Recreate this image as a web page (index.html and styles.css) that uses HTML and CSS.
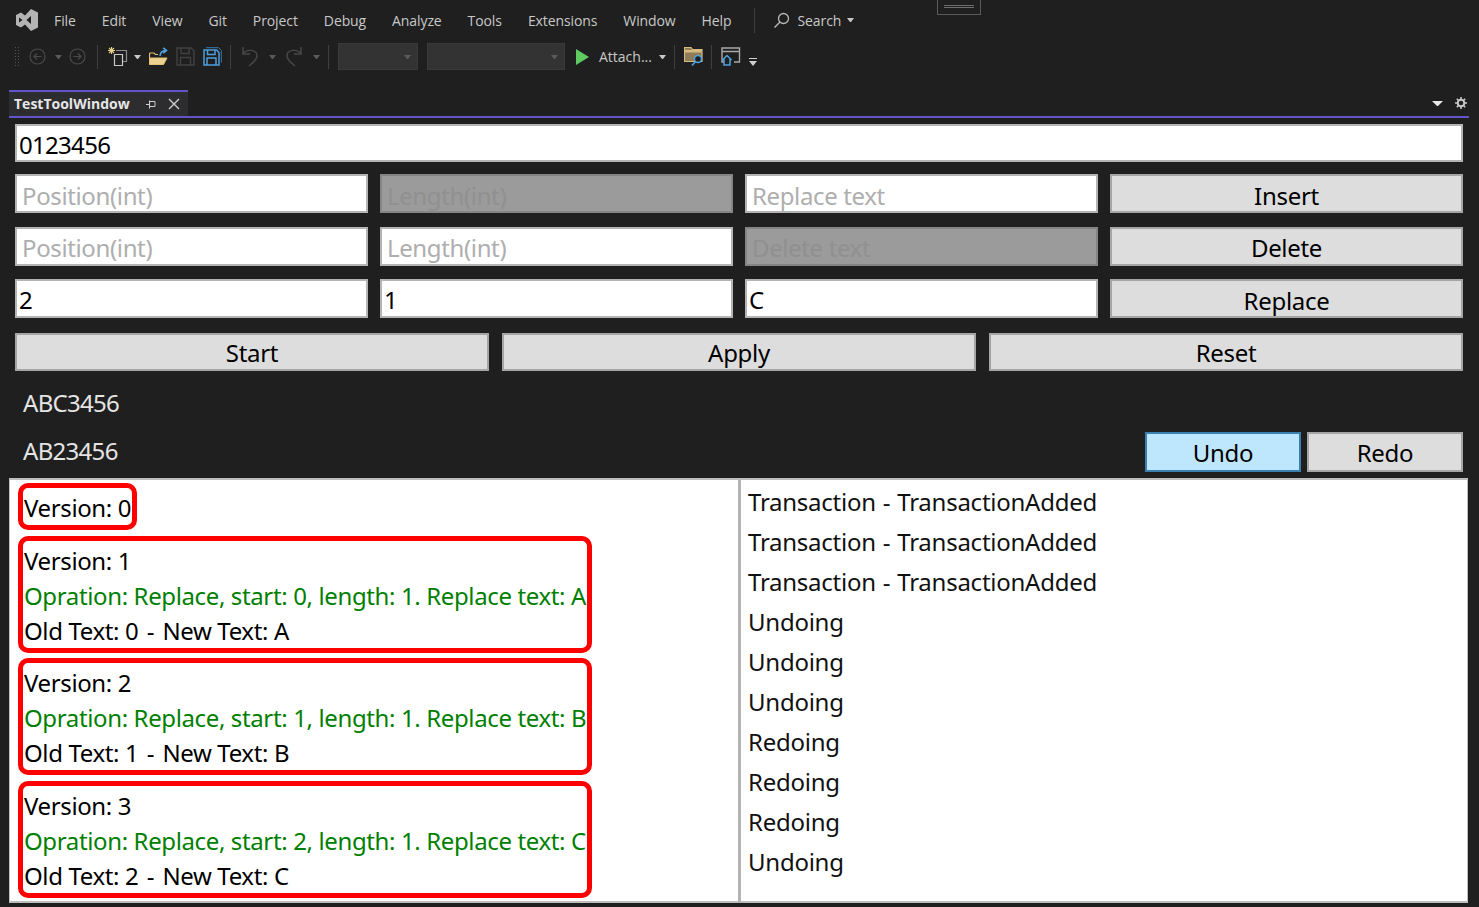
FILE: index.html
```html
<!DOCTYPE html>
<html lang="en">
<head>
  <meta charset="UTF-8" />
  <title>TestToolWindow</title>
  <link rel="stylesheet" href="styles.css">
</head>
<body>
  <div class="title-mark"><i></i></div>

  <nav class="menubar">
    <svg class="logo" width="24" height="24" viewBox="0 0 24 24"><path fill="#b4b4b4" fill-rule="evenodd" d="M6 4.500 L10 7.500 L16 1 L23 4.500 V19.500 L16 23 L10 16.500 L6 19.500 L1 17 V7 Z M4 9.500 V14.500 L7.500 12 Z M16 8 L11.500 12 L16 16 Z"/></svg>
    <span class="menu-item">File</span>
    <span class="menu-item">Edit</span>
    <span class="menu-item">View</span>
    <span class="menu-item">Git</span>
    <span class="menu-item">Project</span>
    <span class="menu-item">Debug</span>
    <span class="menu-item">Analyze</span>
    <span class="menu-item">Tools</span>
    <span class="menu-item">Extensions</span>
    <span class="menu-item">Window</span>
    <span class="menu-item">Help</span>
    <span class="menu-sep"></span>
    <svg class="search-icon" width="17" height="17" viewBox="0 0 17 17"><circle cx="10.500" cy="6.500" r="5" fill="none" stroke="#b8b8b8" stroke-width="1.300"/><path d="M7 10 L1.500 15.500" stroke="#b8b8b8" stroke-width="1.500"/></svg>
    <span class="search-label">Search</span>
    <span class="caret caret-light"></span>
  </nav>

  <div class="toolbar">
    <span class="grip"></span>
    <svg class="t-back" width="17" height="17" viewBox="0 0 17 17"><circle cx="8.500" cy="8.500" r="7.500" fill="none" stroke="#4a4a4a" stroke-width="1.200"/><path d="M12.500 8.500 H5 M8 5.500 L5 8.500 L8 11.500" fill="none" stroke="#4a4a4a" stroke-width="1.200"/></svg>
    <span class="caret t-c1"></span>
    <svg class="t-fwd" width="17" height="17" viewBox="0 0 17 17"><circle cx="8.500" cy="8.500" r="7.500" fill="none" stroke="#4a4a4a" stroke-width="1.200"/><path d="M4.500 8.500 H12 M9 5.500 L12 8.500 L9 11.500" fill="none" stroke="#4a4a4a" stroke-width="1.200"/></svg>
    <span class="tool-sep t-s1"></span>
    <svg class="t-new" width="21" height="21" viewBox="0 0 21 21"><path d="M9 4.500 H19.500 V15.500 H15.500" fill="none" stroke="#8e8e8e" stroke-width="1.200"/><path d="M7.500 8.500 H15.500 V19.500 H7.500 Z" fill="#1f1f1f" stroke="#c8c8c8" stroke-width="1.200"/><path d="M4.500 1 V8 M1 4.500 H8 M2 2 L7 7 M7 2 L2 7" stroke="#e8d28a" stroke-width="1.100"/></svg>
    <span class="caret caret-light t-c2"></span>
    <svg class="t-open" width="19" height="19" viewBox="0 0 19 19"><path d="M.5 6 H5 L6.500 7.500 H9 M.5 6 V17.500" fill="none" stroke="#e3bf78" stroke-width="1.200"/><path d="M.5 11 H18 L14.500 17.500 H.5 Z" fill="#ecd08f" stroke="#e3bf78"/><path d="M11 9 C11.500 5 13 3.500 16.500 3.500 M14.200 .8 L17.500 3.500 L14.200 6.200" fill="none" stroke="#4fa3e0" stroke-width="1.600"/></svg>
    <svg class="t-save" width="19" height="19" viewBox="0 0 19 19"><path d="M1 1 H15 L18 4 V18 H1 Z M5 1 V6.500 H13 V1 M4.500 18 V10.500 H14.500 V18" fill="none" stroke="#414141" stroke-width="1.400"/></svg>
    <svg class="t-saveall" width="19" height="19" viewBox="0 0 19 19"><path d="M3 .7 H15.500 L18.300 3.500 V15.500" fill="none" stroke="#3c78a8" stroke-width="1"/><path d="M1 3 H13.500 L16 5.500 V18 H1 Z M4.500 3 V7.500 H12 V3 M4 18 V11 H13 V18" fill="none" stroke="#4f9fdc" stroke-width="1.500"/></svg>
    <span class="tool-sep t-s2"></span>
    <svg class="t-undo" width="18" height="21" viewBox="0 0 18 21"><path d="M2 1 V8 H9 M2 8 C5 3 15 3 16 9 C16.500 13 12 17 8 20" fill="none" stroke="#4a4a4a" stroke-width="1.400"/></svg>
    <span class="caret t-c3"></span>
    <svg class="t-redo" width="18" height="21" viewBox="0 0 18 21"><path d="M16 1 V8 H9 M16 8 C13 3 3 3 2 9 C1.500 13 6 17 10 20" fill="none" stroke="#4a4a4a" stroke-width="1.400"/></svg>
    <span class="caret t-c4"></span>
    <span class="tool-sep t-s3"></span>
    <span class="combo combo-small"><span class="caret"></span></span>
    <span class="combo combo-large"><span class="caret"></span></span>
    <svg class="t-play" width="13" height="16" viewBox="0 0 13 16"><path fill="#5fc962" d="M0 0 L13 8 L0 16 Z"/></svg>
    <span class="attach">Attach...</span>
    <span class="caret caret-light t-c5"></span>
    <span class="tool-sep t-s4"></span>
    <svg class="t-folder" width="20" height="21" viewBox="0 0 20 21"><path d="M.5 1.500 H7 L8.500 3.500 H18 V15.500 H.5 Z" fill="#8f7c58" stroke="#d8bb80" stroke-width="1.200"/><path d="M1 4 H17.500 V6.500 H1 Z" fill="#d8bb80"/><circle cx="14" cy="13" r="3.500" fill="#1f1f1f" stroke="#4fa3e0" stroke-width="1.400"/><path d="M11.500 15.500 L8 19.500" stroke="#4fa3e0" stroke-width="1.600"/></svg>
    <span class="tool-sep t-s5"></span>
    <svg class="t-home" width="20" height="19" viewBox="0 0 20 19"><path d="M3 15 H1 V1 H18.500 V15 H13 M1 4.500 H18.500" fill="none" stroke="#a8a8a8" stroke-width="1.400"/><path d="M1.500 13 L6 8.500 L10.500 13 M3 12 V18 H9 V12" fill="none" stroke="#4fa3e0" stroke-width="1.500"/></svg>
    <svg class="t-more" width="8" height="8" viewBox="0 0 8 8"><path d="M0 .5 H8" stroke="#cfcfcf"/><path fill="#cfcfcf" d="M0 3 H8 L4 8 Z"/></svg>
  </div>

  <div class="tabstrip">
    <div class="tab">
      <span class="tab-title">TestToolWindow</span>
      <svg class="tab-pin" width="10" height="9" viewBox="0 0 10 9"><path d="M0 4.500 H3.500 M3.500 .5 V8.500 M3.500 1.500 H9 V6.500 H3.500" fill="none" stroke="#d0d0d0"/></svg>
      <svg class="tab-close" width="12" height="12" viewBox="0 0 12 12"><path d="M1 1 L11 11 M11 1 L1 11" stroke="#d0d0d0" stroke-width="1.400"/></svg>
    </div>
    <div class="tab-actions">
      <span class="caret caret-white"></span>
      <svg width="12" height="12" viewBox="0 0 12 12"><circle cx="6" cy="6" r="3.300" fill="none" stroke="#c8c8c8" stroke-width="2"/><path d="M6 0 V2.500 M6 9.500 V12 M0 6 H2.500 M9.500 6 H12 M1.800 1.800 L3.500 3.500 M8.500 8.500 L10.200 10.200 M1.800 10.200 L3.500 8.500 M8.500 3.500 L10.200 1.800" stroke="#c8c8c8" stroke-width="1.600"/></svg>
    </div>
  </div>

  <main class="window">
    <div class="field field-main">0123456</div>

    <div class="form-row">
      <div class="field placeholder">Position(int)</div>
      <div class="field disabled">Length(int)</div>
      <div class="field placeholder">Replace text</div>
      <button class="btn">Insert</button>
    </div>
    <div class="form-row">
      <div class="field placeholder">Position(int)</div>
      <div class="field placeholder">Length(int)</div>
      <div class="field disabled">Delete text</div>
      <button class="btn">Delete</button>
    </div>
    <div class="form-row">
      <div class="field">2</div>
      <div class="field">1</div>
      <div class="field">C</div>
      <button class="btn">Replace</button>
    </div>

    <div class="action-row">
      <button class="btn">Start</button>
      <button class="btn">Apply</button>
      <button class="btn">Reset</button>
    </div>

    <div class="result">ABC3456</div>
    <div class="undo-row">
      <span class="result result-prev">AB23456</span>
      <button class="btn btn-hover">Undo</button>
      <button class="btn">Redo</button>
    </div>

    <section class="panels">
      <div class="versions">
        <div class="version">Version: 0</div>
        <div class="version">
          <div>Version: 1</div>
          <div class="op">Opration: Replace, start: 0, length: 1. Replace text: A</div>
          <div>Old Text: 0 <span class="dash">-</span> New Text: A</div>
        </div>
        <div class="version">
          <div>Version: 2</div>
          <div class="op">Opration: Replace, start: 1, length: 1. Replace text: B</div>
          <div>Old Text: 1 <span class="dash">-</span> New Text: B</div>
        </div>
        <div class="version">
          <div>Version: 3</div>
          <div class="op">Opration: Replace, start: 2, length: 1. Replace text: C</div>
          <div>Old Text: 2 <span class="dash">-</span> New Text: C</div>
        </div>
      </div>
      <div class="events">
        <div>Transaction <span class="dash">-</span> TransactionAdded</div>
        <div>Transaction <span class="dash">-</span> TransactionAdded</div>
        <div>Transaction <span class="dash">-</span> TransactionAdded</div>
        <div>Undoing</div>
        <div>Undoing</div>
        <div>Undoing</div>
        <div>Redoing</div>
        <div>Redoing</div>
        <div>Redoing</div>
        <div>Undoing</div>
      </div>
    </section>
  </main>
</body>
</html>
```

FILE: styles.css
```css
* {
  box-sizing: border-box;
}
html, body {
  margin: 0;
  height: 907px;
  overflow: hidden;
}
body {
  position: relative;
  background: #1f1f1f;
  color: #c8c8c8;
  font-family: "Open Sans", "Noto Sans", sans-serif;
  font-size: 14px;
}

/* top strip */
.title-mark {
  position: absolute;
  left: 937px;
  top: 0;
  width: 44px;
  height: 15px;
  border: 1px solid #5a5a5a;
  border-top: none;
}
.title-mark i {
  display: block;
  margin: 5px 6px 0;
  height: 3px;
  border-top: 1px solid #6e6e6e;
  border-bottom: 1px solid #6e6e6e;
}
.menubar {
  display: flex;
  align-items: center;
  height: 40px;
  padding-left: 15px;
  letter-spacing: -0.1px;
}
.logo {
  margin-right: 15px;
}
.menu-item {
  margin-right: 26px;
}
.menu-sep {
  width: 1px;
  height: 25px;
  background: #3f3f3f;
  margin-left: -4px;
  margin-right: 18px;
}
.search-icon {
  margin-right: 8px;
}
.search-label {
  margin-right: 6px;
}
.caret {
  display: inline-block;
  box-sizing: content-box;
  width: 1px;
  height: 0;
  border-left: 3px solid transparent;
  border-right: 3px solid transparent;
  border-top: 4px solid #5a5a5a;
}
.caret-light {
  border-top-color: #c8c8c8;
}
.caret-white {
  border-left-width: 5px;
  border-right-width: 5px;
  border-top: 5px solid #e8e8e8;
}

/* toolbar */
.toolbar {
  display: flex;
  align-items: center;
  height: 33px;
  padding-left: 14px;
}
.grip {
  width: 6px;
  height: 21px;
  background-image: radial-gradient(#555 40%, transparent 45%);
  background-size: 3px 3px;
}
.tool-sep {
  width: 1px;
  height: 24px;
  background: #3f3f3f;
}
.t-back { margin-left: 9px; }
.t-c1 { margin-left: 9px; }
.t-fwd { margin-left: 7px; }
.t-s1 { margin-left: 11px; }
.t-new { margin-left: 9px; }
.t-c2 { margin-left: 6px; }
.t-open { margin-left: 8px; }
.t-save { margin-left: 8px; }
.t-saveall { margin-left: 8px; }
.t-s2 { margin-left: 8px; }
.t-undo { margin-left: 10px; }
.t-c3 { margin-left: 10px; }
.t-redo { margin-left: 9px; }
.t-c4 { margin-left: 10px; }
.t-s3 { margin-left: 8px; }
.combo {
  display: flex;
  align-items: center;
  justify-content: flex-end;
  height: 27px;
  background: #333;
  border: 1px solid #3a3a3a;
  padding-right: 6px;
}
.combo-small { width: 80px; margin-left: 9px; }
.combo-large { width: 138px; margin-left: 9px; }
.t-play { margin-left: 11px; }
.attach { width: 54px; margin-left: 10px; white-space: nowrap; }
.t-c5 { margin-left: 6px; }
.t-s4 { margin-left: 8px; }
.t-folder { margin-left: 9px; }
.t-s5 { margin-left: 7px; }
.t-home { margin-left: 9px; }
.t-more { margin-left: 8px; margin-top: 10px; }

/* tool window tab */
.tabstrip {
  display: flex;
  justify-content: space-between;
  align-items: stretch;
  height: 28px;
  margin: 17px 10px 0 9px;
  border-bottom: 2px solid #6254c8;
}
.tab {
  display: flex;
  align-items: center;
  width: 179px;
  padding-left: 5px;
  background: #2d2d30;
  border-top: 2px solid #6254c8;
}
.tab-title {
  width: 117px;
  padding-bottom: 2px;
  font-weight: 700;
  color: #e6e6e6;
  white-space: nowrap;
}
.tab-pin { margin-left: 15px; }
.tab-close { margin-left: 12px; }
.tab-actions {
  display: flex;
  align-items: center;
  gap: 12px;
  padding-right: 2px;
}

/* window content */
.window {
  margin: 0 10px 0 9px;
  height: 785px;
  padding-top: 6px;
  font-family: "Noto Sans", "Open Sans", sans-serif;
  font-size: 24px;
  letter-spacing: -0.37px;
  color: #000;
}
.field {
  display: flex;
  align-items: center;
  height: 39px;
  padding: 3px 0 0 2px;
  background: #fff;
  border: 2px solid #b4b4b4;
  overflow: hidden;
  white-space: nowrap;
}
.field-main {
  height: 38px;
  margin: 0 6px;
  padding-top: 2px;
  letter-spacing: -0.7px;
}
.placeholder {
  padding-left: 5px;
  color: #aeaeae;
}
.disabled {
  padding-left: 5px;
  background: #9b9b9b;
  border-color: #858585;
  color: #909090;
}
.form-row {
  display: grid;
  grid-template-columns: repeat(4, 1fr);
  gap: 12px;
  margin: 12px 6px 0;
}
.form-row + .form-row {
  margin-top: 14px;
}
.form-row + .form-row .field,
.form-row + .form-row .btn {
  padding-top: 1px;
}
.form-row + .form-row + .form-row {
  margin-top: 13px;
}
.action-row {
  display: grid;
  grid-template-columns: repeat(3, 1fr);
  gap: 13px;
  margin: 15px 6px 0;
}
.btn {
  height: 38px;
  padding: 0;
  background: #dddddd;
  border: 2px solid #a5a5a5;
  font: inherit;
  letter-spacing: -0.3px;
  color: #000;
}
.form-row .btn {
  height: 39px;
  padding-top: 3px;
}
.form-row + .form-row + .form-row .btn {
  padding-top: 3px;
}
.btn-hover {
  background: #bee6fd;
  border-color: #3c7fb1;
}
.result {
  color: #e4e4e4;
  letter-spacing: -0.7px;
}
.window > .result {
  height: 52px;
  margin-top: 9px;
  padding-left: 14px;
  line-height: 46px;
}
.undo-row {
  display: flex;
  align-items: center;
  gap: 6px;
  height: 40px;
  margin: 0 6px 0 14px;
}
.result-prev {
  flex: 1;
  padding-bottom: 4px;
}
.undo-row .btn {
  width: 156px;
  height: 40px;
}

/* log panels */
.panels {
  display: grid;
  grid-template-columns: 731px 1fr;
  height: 425px;
  margin: 6px 1px 0 0;
  background: #fff;
  border: solid #bdbdbd;
  border-width: 2px 1px;
}
.versions {
  padding: 3px 0 0 8px;
  border-right: 3px solid #b4b4b4;
  line-height: 35px;
}
.version {
  width: fit-content;
  padding: 2px 1px 0 1px;
  margin-bottom: 5.500px;
  border: 5px solid #ff0000;
  border-radius: 10px;
}
.op {
  color: #008000;
}
.dash {
  margin: 0 2.500px;
}
.events {
  padding: 2px 0 0 7px;
  line-height: 40px;
  letter-spacing: -0.25px;
  color: #111;
}
.events .dash {
  margin: 0 1px;
}
```
